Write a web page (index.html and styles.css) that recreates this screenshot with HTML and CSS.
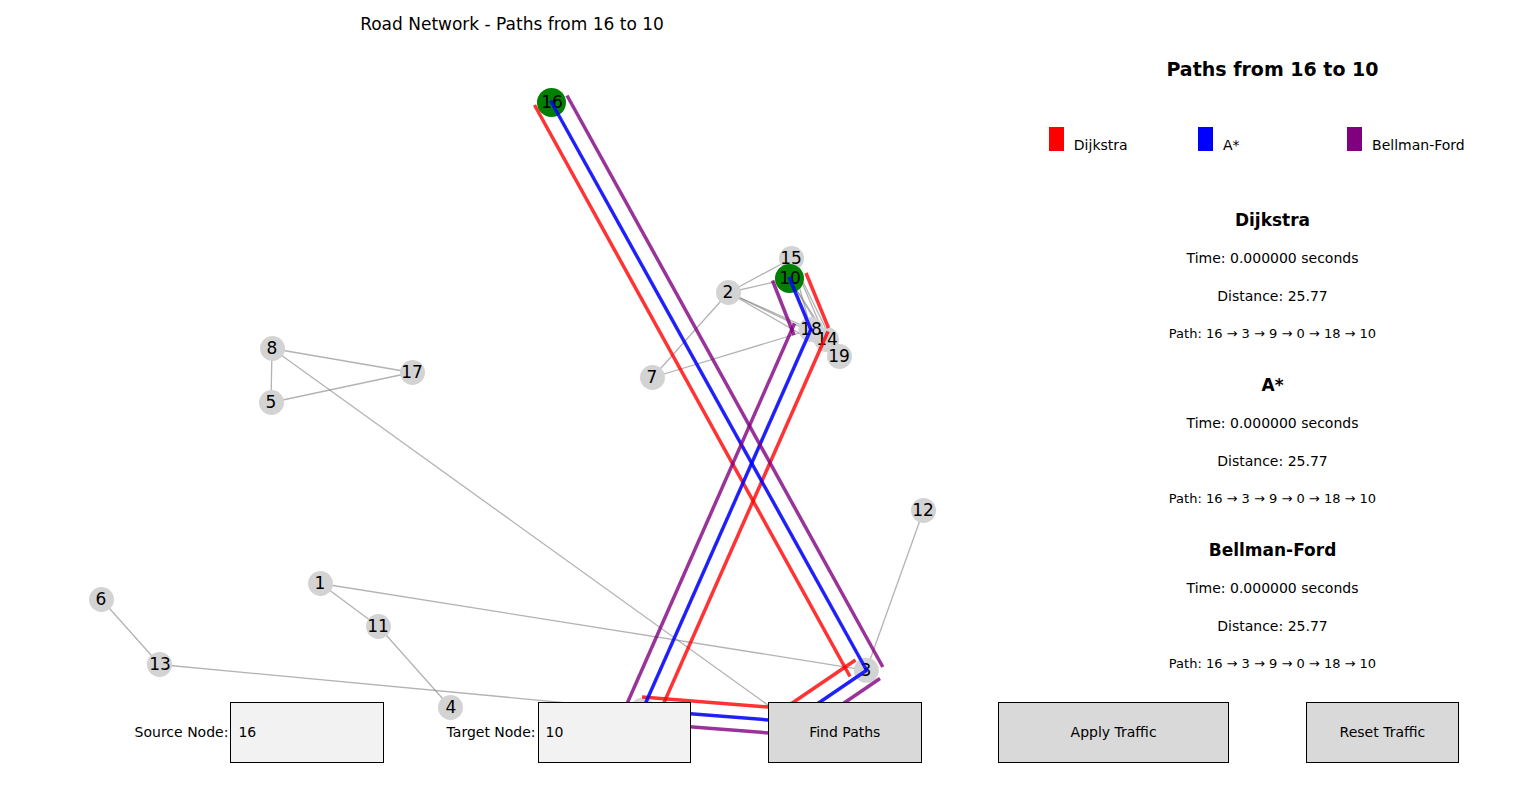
FILE: index.html
```html
<!DOCTYPE html>
<html lang="en">
<head>
<meta charset="utf-8">
<title>Road Network</title>
<link rel="stylesheet" href="styles.css">
</head>
<body>
<main class="figure">
  <section class="plot">
    <h1 class="plot-title">Road Network - Paths from 16 to 10</h1>
    <svg class="graph" viewBox="0 48 1024 714" role="img" aria-label="Road network graph">
      <g class="edges">
        <path d="M272 348.500L412 372.500"/>
        <path d="M272 348.500L271 402.500"/>
        <path d="M271 402.500L412 372.500"/>
        <path d="M272 348.500L791 721.700"/>
        <path d="M320.500 583.500L866.300 670.300"/>
        <path d="M320.500 583.500L378.500 626.500"/>
        <path d="M378.500 626.500L450.500 707.500"/>
        <path d="M101.500 599.500L159.500 664.500"/>
        <path d="M159.500 664.500L642.500 710"/>
        <path d="M923.500 510.500L866.300 670.300"/>
        <path d="M728.500 292.500L652.500 377.500"/>
        <path d="M652.500 377.500L811 329.500"/>
        <path d="M728.500 292.500L791.500 258.500"/>
        <path d="M728.500 292.500L789.500 278.500"/>
        <path d="M728.500 292.500L811 329.500"/>
        <path d="M728.500 292.500L826.500 339.500"/>
        <path d="M728.500 292.500L839.500 356.500"/>
        <path d="M791.500 258.500L789.500 278.500"/>
        <path d="M791.500 258.500L811 329.500"/>
        <path d="M791.500 258.500L826.500 339.500"/>
        <path d="M791.500 258.500L839.500 356.500"/>
        <path d="M789.500 278.500L811 329.500"/>
        <path d="M789.500 278.500L826.500 339.500"/>
        <path d="M789.500 278.500L839.500 356.500"/>
        <path d="M811 329.500L826.500 339.500L839.500 356.500"/>
        <path d="M811 329.500L642.500 710L791 721.700L866.300 670.300L551.500 102.500"/>
      </g>
      <g class="nodes">
        <circle cx="642.500" cy="710" r="12.500"/>
        <circle cx="320.500" cy="583.500" r="12.500"/>
        <circle cx="728.500" cy="292.500" r="12.500"/>
        <circle cx="866.300" cy="670.300" r="12.500"/>
        <circle cx="450.500" cy="707.500" r="12.500"/>
        <circle cx="271.500" cy="402.500" r="12.500"/>
        <circle cx="101.500" cy="599.500" r="12.500"/>
        <circle cx="652.500" cy="377.500" r="12.500"/>
        <circle cx="272.500" cy="348.500" r="12.500"/>
        <circle cx="791" cy="721.700" r="12.500"/>
        <circle cx="378.500" cy="626.500" r="12.500"/>
        <circle cx="923.500" cy="510.500" r="12.500"/>
        <circle cx="159.500" cy="664.500" r="12.500"/>
        <circle cx="826.500" cy="339.500" r="12.500"/>
        <circle cx="791.500" cy="258.500" r="12.500"/>
        <circle cx="412.500" cy="372.500" r="12.500"/>
        <circle cx="811" cy="329.500" r="12.500"/>
        <circle cx="839.500" cy="356.500" r="12.500"/>
        <circle class="endpoint" cx="551.500" cy="102.500" r="14.500"/>
        <circle class="endpoint" cx="789.500" cy="278.500" r="14.500"/>
      </g>
      <g class="node-labels">
        <text x="642" y="715">0</text>
        <text x="320" y="589">1</text>
        <text x="728" y="298">2</text>
        <text x="866" y="676">3</text>
        <text x="451" y="713">4</text>
        <text x="271" y="408">5</text>
        <text x="101" y="605">6</text>
        <text x="652" y="383">7</text>
        <text x="272" y="354">8</text>
        <text x="791" y="727">9</text>
        <text x="790" y="284">10</text>
        <text x="378" y="632">11</text>
        <text x="923" y="516">12</text>
        <text x="160" y="670">13</text>
        <text x="827" y="345">14</text>
        <text x="791" y="264">15</text>
        <text x="552" y="108">16</text>
        <text x="412" y="378">17</text>
        <text x="811" y="335">18</text>
        <text x="839" y="362">19</text>
      </g>
      <g class="route route-dijkstra">
        <path d="M534.500 105L850 676.500"/>
        <path d="M855.500 660L779 712"/>
        <path d="M642 697L793 709"/>
        <path d="M659 714L828 331.500"/>
        <path d="M828.500 328L806 273"/>
      </g>
      <g class="route route-astar">
        <path d="M550.500 100.500L867 671"/>
        <path d="M867 670L791 721.700"/>
        <path d="M791 721.700L642.500 710"/>
        <path d="M642.500 710L811.500 328"/>
        <path d="M811.500 331L789 277"/>
      </g>
      <g class="route route-bellman">
        <path d="M567 95.500L882.800 667"/>
        <path d="M880 678.500L803 731"/>
        <path d="M789 734.500L641 723"/>
        <path d="M626 706L794.500 323.500"/>
        <path d="M794 335L772.500 280.500"/>
      </g>
    </svg>
  </section>

  <aside class="results">
    <h2 class="results-title">Paths from 16 to 10</h2>
    <ul class="legend">
      <li class="legend-item"><span class="swatch swatch-dijkstra"></span>Dijkstra</li>
      <li class="legend-item"><span class="swatch swatch-astar"></span>A*</li>
      <li class="legend-item"><span class="swatch swatch-bellman"></span>Bellman-Ford</li>
    </ul>
    <section class="result">
      <h3>Dijkstra</h3>
      <p>Time: 0.000000 seconds</p>
      <p>Distance: 25.77</p>
      <p class="result-path">Path: 16 → 3 → 9 → 0 → 18 → 10</p>
    </section>
    <section class="result">
      <h3>A*</h3>
      <p>Time: 0.000000 seconds</p>
      <p>Distance: 25.77</p>
      <p class="result-path">Path: 16 → 3 → 9 → 0 → 18 → 10</p>
    </section>
    <section class="result">
      <h3>Bellman-Ford</h3>
      <p>Time: 0.000000 seconds</p>
      <p>Distance: 25.77</p>
      <p class="result-path">Path: 16 → 3 → 9 → 0 → 18 → 10</p>
    </section>
  </aside>

  <form class="controls">
    <label class="field-label" for="source">Source Node:</label>
    <input class="field" id="source" type="text" value="16">
    <label class="field-label" for="target">Target Node:</label>
    <input class="field" id="target" type="text" value="10">
    <button class="action action-find" type="button">Find Paths</button>
    <button class="action action-apply" type="button">Apply Traffic</button>
    <button class="action action-reset" type="button">Reset Traffic</button>
  </form>
</main>
</body>
</html>
```
FILE: styles.css
```css
* {
  box-sizing: border-box;
}

body {
  margin: 0;
  background: #fff;
  color: #000;
  font-family: "DejaVu Sans", sans-serif;
  font-size: 14px;
}

h1, h2, h3, p, ul {
  margin: 0;
  padding: 0;
}

.figure {
  display: grid;
  grid-template-columns: 2fr 1fr;
  grid-template-rows: 1fr auto;
  min-height: 100vh;
  padding-bottom: 39px;
}

.plot {
  grid-column: 1;
  grid-row: 1 / 3;
}

.plot-title {
  font-size: 17px;
  font-weight: 400;
  line-height: 48px;
  text-align: center;
}

.graph {
  display: block;
  width: 100%;
  height: auto;
}

.edges {
  fill: none;
  stroke: gray;
  stroke-width: 1.3;
}

.edges path {
  stroke-opacity: 0.6;
}

.nodes {
  fill: #d3d3d3;
}

.nodes .endpoint {
  fill: #008000;
}

.node-labels {
  font-size: 17px;
  text-anchor: middle;
}

.route {
  fill: none;
  stroke-width: 3.5;
}

.route path {
  stroke-opacity: 0.8;
}

.route-dijkstra { stroke: #f00; }
.route-astar { stroke: #00f; }
.route-bellman { stroke: #800080; }

.route-astar path {
  stroke-opacity: 0.85;
}

.results {
  grid-column: 2;
  grid-row: 1;
  padding: 50px 15px 0 0;
  text-align: center;
}

.results-title {
  font-size: 19px;
  line-height: 38px;
}

.legend {
  display: grid;
  grid-template-columns: 30fr 30fr 35fr;
  margin-top: 39px;
  padding-left: 5%;
  list-style: none;
}

.legend-item {
  display: flex;
  align-items: flex-end;
  gap: 10px;
  line-height: 12px;
  white-space: nowrap;
}

.swatch {
  flex: none;
  width: 15px;
  height: 24px;
}

.swatch-dijkstra { background: #f00; }
.swatch-astar { background: #00f; }
.swatch-bellman { background: #800080; }

.result {
  margin-top: 13px;
  line-height: 38px;
}

.legend + .result {
  margin-top: 50px;
}

.result h3 {
  font-size: 17px;
}

.result-path {
  font-size: 13px;
}

.controls {
  z-index: 1;
  grid-column: 1 / 3;
  grid-row: 2;
  display: grid;
  grid-template-columns: 15fr 10fr 10fr 10fr 5fr 10fr 5fr 15fr 5fr 10fr 5fr;
}

.field-label {
  align-self: center;
  padding: 0 2px 2px 0;
  text-align: right;
  white-space: nowrap;
}

.field,
.action {
  width: 100%;
  min-width: 0;
  height: 61px;
  border: 1px solid #000;
  border-radius: 0;
  color: #000;
  font: inherit;
}

.field {
  padding: 0 7px 2px;
  background: #f2f2f2;
}

.action {
  padding: 0 0 2px;
  background: #d9d9d9;
}

.action-find { grid-column: 6; }
.action-apply { grid-column: 8; }
.action-reset { grid-column: 10; }
```
